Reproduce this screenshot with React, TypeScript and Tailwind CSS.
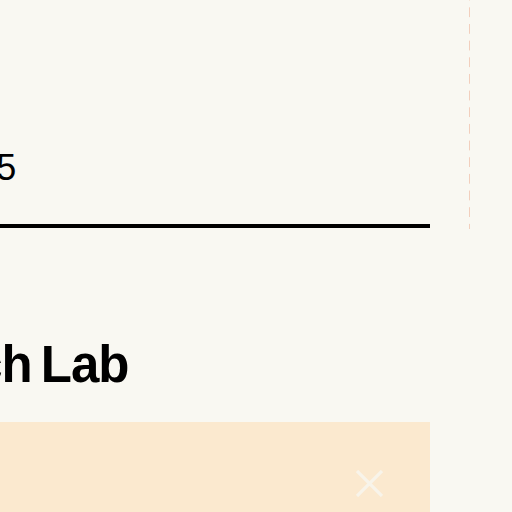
export default function App() {
  return (
    <div className="min-h-screen overflow-hidden bg-[#f9f8f2] font-['Liberation_Sans',Arial,sans-serif] text-black">
      <div className="flex items-start">
        {/* main column, left part runs off the viewport */}
        <div className="-ml-[193px] w-[623px] shrink-0">
          <header className="h-[228px] border-b-4 border-black pt-[150px]">
            <p className="ml-[15px] text-[36px] leading-9">Spring 2025</p>
          </header>

          <h1 className="mt-[111px] ml-[3px] text-[51px] font-bold leading-none tracking-[-1px] [word-spacing:-4px]">
            Research Lab
          </h1>

          <div className="mt-[32px] flex h-[200px] justify-end bg-[#fbe9cf] pt-[48px] pr-[47px]">
            <button className="h-[27px] w-[27px] text-[#f8f4ea]" aria-label="Close">
              <svg viewBox="0 0 27 27" className="h-full w-full" fill="none" stroke="currentColor" strokeWidth="3.2">
                <path d="M1 1L26 26M26 1L1 26" />
              </svg>
            </button>
          </div>
        </div>

        {/* dashed divider */}
        <div className="ml-[39px] h-[229px] w-px shrink-0 bg-[linear-gradient(to_bottom,#f2cfbd_60%,transparent_60%)] bg-[length:1px_16.67px] bg-[position:0_7.33px]" />
      </div>
    </div>
  );
}
